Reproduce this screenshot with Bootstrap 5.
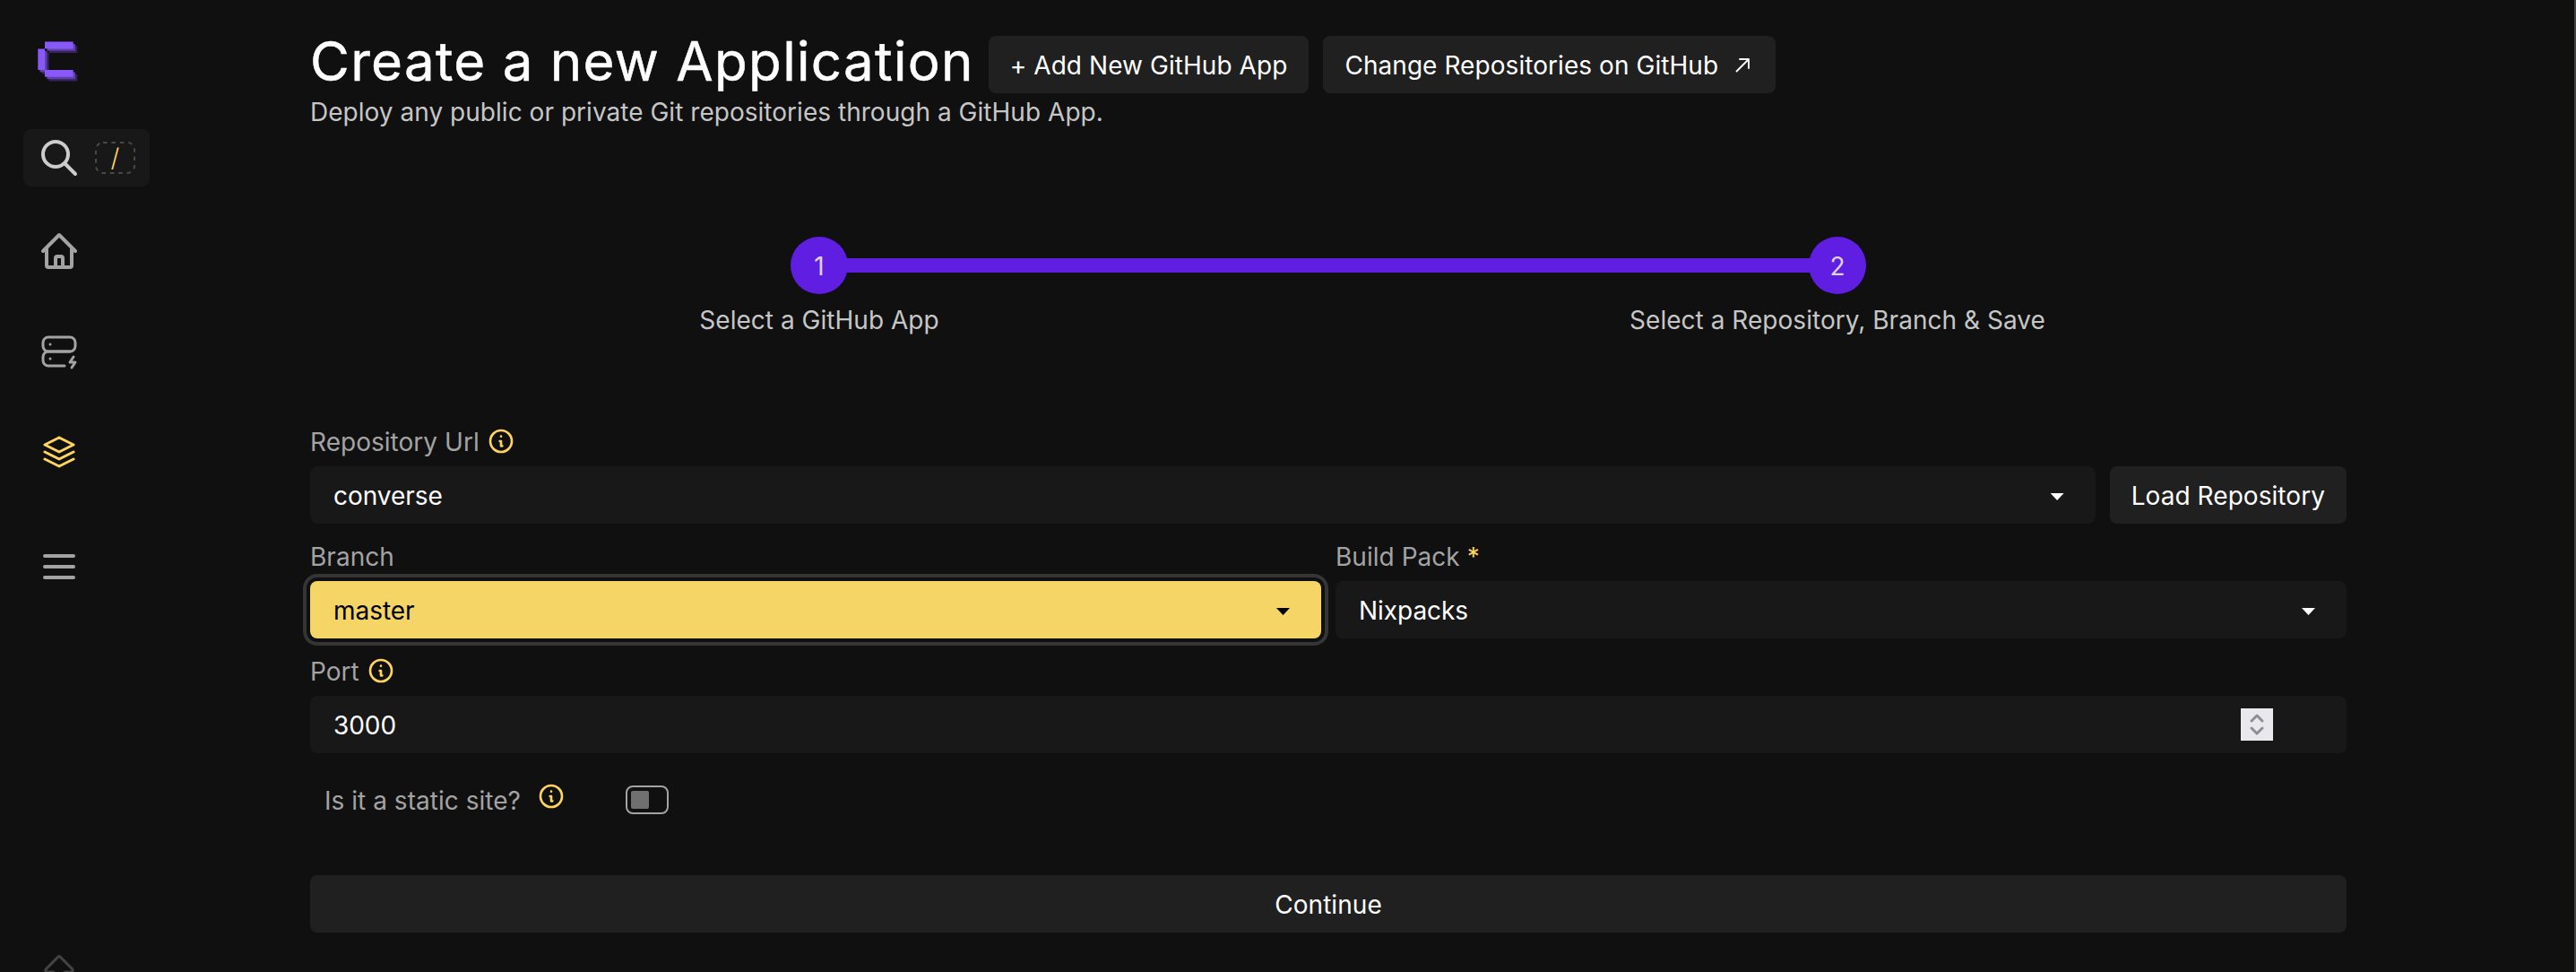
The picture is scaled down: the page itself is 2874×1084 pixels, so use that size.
<!DOCTYPE html>
<html lang="en">
<head>
<meta charset="utf-8">
<title>Create a new Application</title>
<link href="https://cdn.jsdelivr.net/npm/bootstrap@5.3.0/dist/css/bootstrap.min.css" rel="stylesheet">
<style>
  body { background: #101010; color: #c6c6c6; font: 400 28px/40px Inter, "Liberation Sans", sans-serif; letter-spacing: .03px; height: 1084px; overflow: hidden; }
  svg { display: block; flex: none; fill: none; stroke: currentColor; stroke-linecap: round; stroke-linejoin: round; }
  .shell { height: 1084px; border-right: 2px solid #454440; }
  .side { width: 192px; padding: 42px 0 0 26px; color: #a3a3a3; }
  .side .ico { margin-left: 16px; }
  .brandmark { margin-left: 12px; }
  .finder { width: 141px; height: 64px; margin: 50px 0 48px; padding: 0 16px; background: #181818; border-radius: 8px; color: #ccc; }
  .slash { width: 45px; height: 36px; color: #fcd45f; font-weight: 300; }
  .content { width: 2272px; margin-left: 154px; padding-top: 32px; }
  h1 { font-size: 60px; line-height: 72px; letter-spacing: 1.3px; font-weight: 400; color: #fff; -webkit-text-stroke: .5px #fff; }
  .act, .act:hover { height: 64px; padding: 2px 24px 0; border: 0; border-radius: 8px; background: #202020; color: #fff; font-size: 28px; line-height: 40px; letter-spacing: .06px; }
  .sub { padding-top: 1px; height: 40px; }
  .stage { width: 1136px; position: relative; }
  .dot { width: 64px; height: 64px; padding-top: 2px; margin-bottom: 9px; background: #5f1ee2; color: #dfd2f9; position: relative; z-index: 1; }
  .stage + .stage::before { content: ""; position: absolute; top: 24px; right: 50%; width: 100%; height: 16px; background: #5f1ee2; }
  .steps { padding: 120px 0 96px; }
  .cap { height: 40px; margin-bottom: 7px; color: #a3a3a3; gap: 8px; }
  .info { color: #fcd45f; margin-top: -2px; }
  .field { height: 64px; padding: 2px 26px 0; border-radius: 8px; background: #181818; color: #fff; letter-spacing: -.05px; }
  .picked { background: #f5d565; color: #000; box-shadow: 0 0 0 4px #101010, 0 0 0 8px #353535; }
  .tri { width: 15px; height: 8px; background: currentColor; clip-path: polygon(0 0, 100% 0, 50% 100%); margin: 2px 9px 0 0; }
  .rowgap { margin-bottom: 17px; }
  .spin { width: 36px; height: 36px; margin: -2px 56px 0 0; background: #e9e8ed; color: #8f8d9a; }
  .knob { width: 48px; height: 32px; padding: 4px; border: 2px solid #a3a3a3; border-radius: 8px; }
  .knob div { width: 20px; height: 20px; background: #707070; border-radius: 2px; }
</style>
</head>
<body>
<svg width="0" height="0" class="position-absolute"><symbol id="info" viewBox="0 0 24 24"><path stroke-width="2" d="M13 16h-1v-4h-1m1-4h.01M21 12a9 9 0 11-18 0 9 9 0 0118 0z"/></symbol></svg>
<div class="shell d-flex">
  <nav class="side d-flex flex-column flex-shrink-0">
    <svg width="52" height="52" viewBox="38 42 52 52" class="brandmark">
      <g stroke="none">
        <path fill="#35225e" d="M54.7 51.3h31.6v7.8H54.7zM46.9 59.1h7.8v23.6h-7.8zM54.7 82.7h31.6v7.8H54.7z"/>
        <path fill="#5f41a5" d="M52.4 49h31.6v7.8H52.4zM44.6 56.8h7.8v23.6h-7.8zM52.4 80.4h31.6v7.8H52.4z"/>
        <path fill="#8958f8" d="M50 46.6h31.7v7.8H50zM42.3 54.4h7.8V78h-7.8zM50 78h31.7v7.8H50z"/>
        <path fill="#101010" d="M50 54.4h2.4v2.4H50z"/>
      </g>
    </svg>
    <div class="finder d-flex align-items-center justify-content-between flex-shrink-0">
      <svg width="48" height="48" viewBox="0 0 24 24" stroke-width="2"><circle cx="10" cy="10" r="7"/><path d="M21 21l-6-6"/></svg>
      <div class="slash position-relative d-flex align-items-center justify-content-center"><svg class="position-absolute top-0 start-0" width="45" height="36"><rect x="1" y="1" width="43" height="34" rx="8" stroke="#484848" stroke-width="2" stroke-linecap="butt" stroke-dasharray="4.6 4.8"/></svg><span>/</span></div>
    </div>
    <svg class="ico" width="48" height="48" viewBox="0 0 24 24" stroke-width="2"><path d="M3 12l9-9 9 9M5 10v10a1 1 0 001 1h12a1 1 0 001-1V10M10 21v-5a1 1 0 011-1h2a1 1 0 011 1v5"/></svg>
    <svg class="ico" style="margin-top:64px" width="48" height="48" viewBox="0 0 24 24" stroke-width="1.5"><rect x="3" y="4" width="18" height="8" rx="3"/><path d="M15 20H6a3 3 0 01-3-3v-2a3 3 0 013-3h12M7 8v.01M7 16v.01M20 15l-2 3h3l-2 3"/></svg>
    <svg class="ico" style="margin-top:64px;color:#fcd45f" width="48" height="48" viewBox="0 0 24 24" stroke-width="1.5"><path d="M12 4L4 8l8 4 8-4-8-4M4 12l8 4 8-4M4 16l8 4 8-4"/></svg>
    <svg class="ico" style="margin-top:80px" width="48" height="48" viewBox="0 0 24 24" stroke-width="2"><path d="M4 6h16M4 12h16M4 18h16"/></svg>
    <svg class="ico" style="margin-top:404px;color:#424242" width="48" height="48" viewBox="0 0 24 24" stroke-width="1.5"><path d="M9 20v-8H5.414a1 1 0 01-.707-1.707l6.586-6.586a1 1 0 011.414 0l6.586 6.586A1 1 0 0118.586 12H15v8z"/></svg>
  </nav>
  <main class="content flex-shrink-0">
    <div class="d-flex align-items-end gap-3">
      <h1 class="m-0">Create a new Application</h1>
      <button class="btn act">+ Add New GitHub App</button>
      <button class="btn act d-flex align-items-center">Change Repositories on GitHub
        <svg width="24" height="24" viewBox="0 0 24 24" stroke-width="1.8" style="margin:-2px 0 0 16px"><path d="M4.5 19.5L18 6M8 6h10v10"/></svg></button>
    </div>
    <div class="sub">Deploy any public or private Git repositories through a GitHub App.</div>
    <div class="steps d-flex">
      <div class="stage d-flex flex-column align-items-center"><div class="dot rounded-circle d-flex align-items-center justify-content-center">1</div>Select a GitHub App</div>
      <div class="stage d-flex flex-column align-items-center"><div class="dot rounded-circle d-flex align-items-center justify-content-center">2</div>Select a Repository, Branch &amp; Save</div>
    </div>
    <div class="cap d-flex align-items-center">Repository Url <svg class="info" width="32" height="32"><use href="#info"/></svg></div>
    <div class="d-flex gap-3 rowgap">
      <div class="field d-flex align-items-center justify-content-between flex-grow-1">converse<span class="tri"></span></div>
      <button class="btn act">Load Repository</button>
    </div>
    <div class="d-flex gap-3 rowgap">
      <div class="w-50">
        <div class="cap d-flex align-items-center">Branch</div>
        <div class="field picked d-flex align-items-center justify-content-between">master<span class="tri"></span></div>
      </div>
      <div class="w-50">
        <div class="cap d-flex align-items-center">Build Pack <span style="color:#fcd45f">*</span></div>
        <div class="field d-flex align-items-center justify-content-between">Nixpacks<span class="tri"></span></div>
      </div>
    </div>
    <div class="cap d-flex align-items-center">Port <svg class="info" width="32" height="32"><use href="#info"/></svg></div>
    <div class="field d-flex align-items-center justify-content-between">3000
      <span class="spin"><svg width="36" height="36" stroke-width="3" stroke-linecap="butt"><path d="M12 14l6-6 6 6M12 22l6 6 6-6"/></svg></span></div>
    <div class="d-flex align-items-center" style="height:104px;padding-left:16px;color:#a3a3a3"><span style="padding-top:2px">Is it a static site?</span>
      <svg class="info" style="margin:-8px 0 0 18px" width="32" height="32"><use href="#info"/></svg>
      <div class="knob" style="margin-left:67px"><div></div></div></div>
    <button class="btn act w-100" style="margin-top:32px">Continue</button>
  </main>
</div>
<script src="https://cdn.jsdelivr.net/npm/bootstrap@5.3.0/dist/js/bootstrap.bundle.min.js"></script>
</body>
</html>
